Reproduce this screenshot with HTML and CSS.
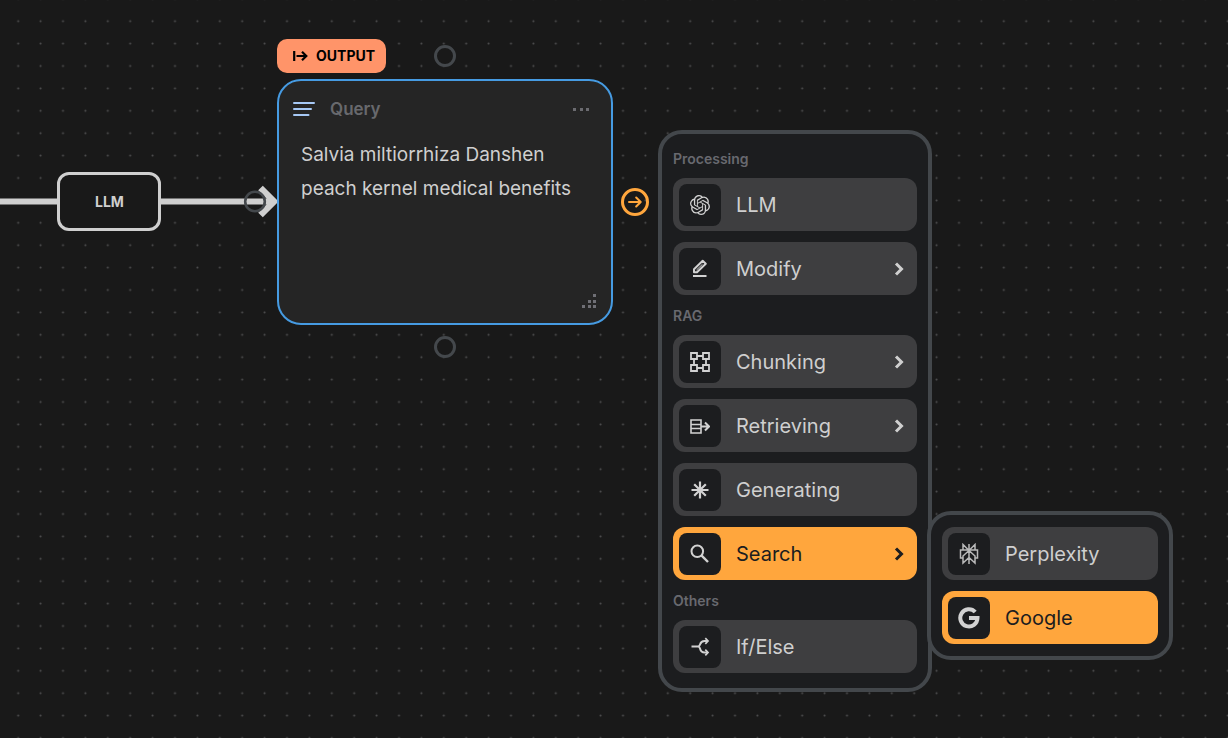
FILE: index.html
```html
<!DOCTYPE html>
<html lang="en">
<head>
    <meta charset="UTF-8">
    <meta name="viewport" content="width=device-width, initial-scale=1.0">
    <title>Flow editor</title>
    <link rel="stylesheet" href="styles.css">
</head>
<body>
    <main class="canvas">
        <svg class="grid" aria-hidden="true">
            <defs>
                <pattern id="dots" width="20" height="20" patternUnits="userSpaceOnUse" patternTransform="translate(7 10) scale(1.12)">
                    <circle cx="10" cy="10" r="0.9" fill="#505051"/>
                </pattern>
            </defs>
            <rect width="100%" height="100%" fill="url(#dots)"/>
        </svg>

        <!-- edge into the query node -->
        <svg class="edge" viewBox="0 0 280 40" aria-hidden="true">
            <path d="M0 19.500H272" stroke="#cfcfcf" stroke-width="6"/>
            <path d="M260.500 6L274 19.500L260.500 33" fill="none" stroke="#cfcfcf" stroke-width="6.500"/>
            <circle cx="255" cy="19.500" r="9.800" fill="none" stroke="#44484c" stroke-width="2.600"/>
        </svg>

        <div class="node llm">LLM</div>

        <div class="tag">
            <svg width="15" height="12" viewBox="0 0 15 12" fill="none" stroke="#000" stroke-width="2.200">
                <path d="M1.200 1V11M3.500 6H13M9 1.800L13.300 6L9 10.200"/>
            </svg>
            <span>OUTPUT</span>
        </div>

        <section class="node query">
            <header class="query_head">
                <svg width="22" height="14" viewBox="0 0 22 14" stroke="#a6c8f5" stroke-width="2" stroke-linecap="round">
                    <path d="M1 1H21M1 7H18M1 13H15.500"/>
                </svg>
                <label for="query_text">Query</label>
                <button class="more" aria-label="More">
                    <svg width="17" height="3" viewBox="0 0 17 3" fill="#6b6b70">
                        <path d="M0 0h3v3h-3zM7 0h3v3h-3zM13 0h3v3h-3z"/>
                    </svg>
                </button>
            </header>
            <textarea id="query_text" class="query_text" spellcheck="false">Salvia miltiorrhiza Danshen
peach kernel medical benefits</textarea>
            <svg class="resize" width="15" height="15" viewBox="0 0 15 15" fill="#6f6f75">
                <path d="M11 0h3v3h-3zM6 6h3v3h-3zM11 6h3v3h-3zM0 11h3v3h-3zM6 11h3v3h-3zM11 11h3v3h-3z"/>
            </svg>
        </section>

        <span class="handle top"></span>
        <span class="handle bottom"></span>
        <button class="connect" aria-label="Add next node">
            <svg width="14" height="12" viewBox="0 0 14 12" fill="none" stroke="#ffa63d" stroke-width="2" stroke-linecap="round" stroke-linejoin="round">
                <path d="M1 6H12.500M8.200 1.500L12.700 6L8.200 10.500"/>
            </svg>
        </button>

        <nav class="menu" aria-label="Add node">
            <h2 class="menu_title">Processing</h2>
            <button class="item">
                <span class="icon"><svg width="20" height="20" viewBox="0 0 24 24" fill="#d2d2d2">
                    <path d="M22.2819 9.8211a5.9847 5.9847 0 0 0-.5157-4.9108 6.0462 6.0462 0 0 0-6.5098-2.9A6.0651 6.0651 0 0 0 4.9807 4.1818a5.9847 5.9847 0 0 0-3.9977 2.9 6.0462 6.0462 0 0 0 .7427 7.0966 5.98 5.98 0 0 0 .511 4.9107 6.051 6.051 0 0 0 6.5146 2.9001A5.9847 5.9847 0 0 0 13.2599 24a6.0557 6.0557 0 0 0 5.7718-4.2058 5.9894 5.9894 0 0 0 3.9977-2.9001 6.0557 6.0557 0 0 0-.7475-7.0729zm-9.022 12.6081a4.4755 4.4755 0 0 1-2.8764-1.0408l.1419-.0804 4.7783-2.7582a.7948.7948 0 0 0 .3927-.6813v-6.7369l2.02 1.1686a.071.071 0 0 1 .038.052v5.5826a4.504 4.504 0 0 1-4.4945 4.4944zm-9.6607-4.1254a4.4708 4.4708 0 0 1-.5346-3.0137l.142.0852 4.783 2.7582a.7712.7712 0 0 0 .7806 0l5.8428-3.3685v2.3324a.0804.0804 0 0 1-.0332.0615L9.74 19.9502a4.4992 4.4992 0 0 1-6.1408-1.6464zM2.3408 7.8956a4.485 4.485 0 0 1 2.3655-1.9728V11.6a.7664.7664 0 0 0 .3879.6765l5.8144 3.3543-2.0201 1.1685a.0757.0757 0 0 1-.071 0l-4.8303-2.7865A4.504 4.504 0 0 1 2.3408 7.872zm16.5963 3.8558L13.1038 8.364 15.1192 7.2a.0757.0757 0 0 1 .071 0l4.8303 2.7913a4.4944 4.4944 0 0 1-.6765 8.1042v-5.6772a.79.79 0 0 0-.407-.667zm2.0107-3.0231l-.142-.0852-4.7735-2.7818a.7759.7759 0 0 0-.7854 0L9.409 9.2297V6.8974a.0662.0662 0 0 1 .0284-.0615l4.8303-2.7866a4.4992 4.4992 0 0 1 6.6802 4.66zM8.3065 12.863l-2.02-1.1638a.0804.0804 0 0 1-.038-.0567V6.0742a4.4992 4.4992 0 0 1 7.3757-3.4537l-.142.0805L8.704 5.459a.7948.7948 0 0 0-.3927.6813zm1.0976-2.3654l2.602-1.4998 2.6069 1.4998v2.9994l-2.5974 1.4997-2.6067-1.4997Z"/>
                </svg></span>
                LLM
            </button>
            <button class="item">
                <span class="icon"><svg width="20" height="20" viewBox="0 0 20 20" fill="none" stroke="#d2d2d2" stroke-width="2">
                    <path d="M3 17H16.500M4 13.200V10.300L12.700 1.800L15.800 4.700L7 13.200Z" stroke-linejoin="round"/>
                    <path d="M6.500 11L12.500 5.200" stroke-width="1"/>
                </svg></span>
                Modify
                <svg class="arrow" viewBox="0 0 10 14"><path d="M2 1.500L7.500 7L2 12.500"/></svg>
            </button>

            <h2 class="menu_title">RAG</h2>
            <button class="item">
                <span class="icon"><svg width="20" height="20" viewBox="0 0 20 20" fill="none" stroke="#d2d2d2" stroke-width="1.800">
                    <path d="M1 1H7V7H1ZM13 1H19V7H13ZM1 13H7V19H1ZM13 13H19V19H13ZM7 4H13M7 16H13M4 7V13M16 7V13"/>
                </svg></span>
                Chunking
                <svg class="arrow" viewBox="0 0 10 14"><path d="M2 1.500L7.500 7L2 12.500"/></svg>
            </button>
            <button class="item">
                <span class="icon"><svg width="20" height="20" viewBox="0 0 20 20" fill="none" stroke="#d2d2d2" stroke-width="1.600">
                    <path d="M1 4H11V17H1ZM1 8.500H11M1 12.500H11"/>
                    <path d="M11 10.500H19M15 6.500L19 10.500L15 14.500" stroke-width="2"/>
                </svg></span>
                Retrieving
                <svg class="arrow" viewBox="0 0 10 14"><path d="M2 1.500L7.500 7L2 12.500"/></svg>
            </button>
            <button class="item">
                <span class="icon"><svg width="20" height="20" viewBox="0 0 20 20" stroke="#d2d2d2" stroke-width="2.200">
                    <path d="M10 1.500V18.500M1.500 10H18.500M4.200 4.200L15.800 15.800M15.800 4.200L4.200 15.800"/>
                </svg></span>
                Generating
            </button>
            <button class="item active">
                <span class="icon"><svg width="20" height="20" viewBox="0 0 20 20" fill="none" stroke="#d2d2d2" stroke-width="2">
                    <circle cx="7.300" cy="7.300" r="5.800"/>
                    <path d="M11.400 11.400L18 18" stroke-width="2.400"/>
                </svg></span>
                Search
                <svg class="arrow" viewBox="0 0 10 14"><path d="M2 1.500L7.500 7L2 12.500"/></svg>
            </button>

            <h2 class="menu_title">Others</h2>
            <button class="item">
                <span class="icon"><svg width="20" height="20" viewBox="0 0 20 20" fill="none" stroke="#d2d2d2" stroke-width="2">
                    <path d="M1.500 9.500H8.500M17.500 4H14.500C11.500 4 10.500 6 10 7.500C9.700 8.800 9.500 9.500 8 9.500C9.500 9.500 9.700 10.200 10 11.500C10.500 13.500 11.500 15.500 14.500 15.500H17.500"/>
                    <path d="M15.300 1.200L18 4L15.300 6.800M15.300 12.700L18 15.500L15.300 18.300" stroke-width="1.700"/>
                </svg></span>
                If/Else
            </button>
        </nav>

        <nav class="menu submenu" aria-label="Search">
            <button class="item">
                <span class="icon"><svg width="20" height="22" viewBox="0 0 20 22" fill="none" stroke="#b9b9b9" stroke-width="1.500">
                    <path d="M10 1V21M4 1.500V7H16V1.500L10 7.500ZM10 7.500L4 1.500M4 7H1.500V15H4M16 7H18.500V15H16M10 7.500L4 13V20L10 14.500L16 20V13Z"/>
                </svg></span>
                Perplexity
            </button>
            <button class="item active">
                <span class="icon"><svg width="22" height="22" viewBox="0 0 22 22" fill="none" stroke="#d2d2d2" stroke-width="4">
                    <path d="M17.200 5A8.600 8.600 0 1 0 19.500 11H11"/>
                </svg></span>
                Google
            </button>
        </nav>
    </main>
</body>
</html>
```
FILE: styles.css
```css
*{
    box-sizing: border-box;
}
body{
    margin: 0;
    background: #191919;
    color: #cfcfcf;
    font-family: Inter, "Open Sans", sans-serif;
}
button{
    margin: 0;
    padding: 0;
    border: none;
    background: none;
    color: inherit;
    font: inherit;
    cursor: pointer;
}
svg{
    display: block;
    flex: none;
}
.canvas{
    position: relative;
    min-height: 100vh;
    overflow: hidden;
}
.grid{
    position: absolute;
    width: 100%;
    height: 100%;
}

/* nodes */
.edge{
    position: absolute;
    left: 0;
    top: 182px;
    width: 280px;
}
.node{
    position: absolute;
}
.llm{
    left: 57px;
    top: 172px;
    padding: 17px 34px 17px 35px;
    border: 3px solid #cfcfcf;
    border-radius: 12px;
    background: #191919;
    font-size: 14px;
    font-weight: 700;
    line-height: 19px;
}
.tag{
    position: absolute;
    left: 277px;
    top: 39px;
    display: flex;
    align-items: center;
    gap: 8px;
    padding: 8px 11px 8px 16px;
    border-radius: 10px;
    background: #ff9469;
    color: #000;
    font-size: 14px;
    font-weight: 700;
    line-height: 18px;
}
.query{
    left: 277px;
    top: 79px;
    width: 336px;
    border: 2px solid #469be2;
    border-radius: 24px;
    background: #252525;
}
.query_head{
    display: flex;
    align-items: center;
    gap: 15px;
    padding: 17px 21px 15px 14px;
    color: #68696d;
    font-size: 17px;
    font-weight: 600;
    line-height: 22px;
}
.more{
    margin-left: auto;
    padding: 8px 0;
}
.query_text{
    display: block;
    width: 100%;
    height: 159px;
    padding: 3px 22px;
    border: none;
    outline: none;
    resize: none;
    overflow: hidden;
    background: none;
    color: #cfcfcf;
    font: 19px/34px Inter, "Open Sans", sans-serif;
}
.resize{
    margin: 0 14px 14px auto;
}
.handle{
    position: absolute;
    left: 434px;
    width: 22px;
    height: 22px;
    border: 3px solid #44484c;
    border-radius: 50%;
}
.top{
    top: 45px;
}
.bottom{
    top: 336px;
}
.connect{
    position: absolute;
    left: 621px;
    top: 188px;
    display: grid;
    place-items: center;
    width: 28px;
    height: 28px;
    border: 3px solid #ffa63d;
    border-radius: 50%;
}

/* menus */
.menu{
    position: absolute;
    left: 658px;
    top: 130px;
    display: flex;
    flex-direction: column;
    gap: 11px;
    width: 274px;
    padding: 15px 11px;
    border: 4px solid #43474b;
    border-radius: 24px;
    background: #1c1d1f;
}
.submenu{
    left: 927px;
    top: 511px;
    width: 246px;
    padding: 12px 11px;
}
.menu_title{
    margin: 0;
    padding-top: 2px;
    color: #68696f;
    font-size: 14px;
    font-weight: 600;
    line-height: 16px;
}
.item{
    display: flex;
    align-items: center;
    gap: 15px;
    padding: 6px 13px 5px 6px;
    border-radius: 12px;
    background: #3e3e40;
    font-size: 20px;
    text-align: left;
}
.icon{
    display: grid;
    place-items: center;
    width: 42px;
    height: 42px;
    border-radius: 8px;
    background: #1c1d1f;
}
.arrow{
    width: 10px;
    height: 14px;
    margin-left: auto;
    fill: none;
    stroke: currentColor;
    stroke-width: 3;
}
.active{
    background: #ffa63d;
    color: #1c1d1f;
}
```
